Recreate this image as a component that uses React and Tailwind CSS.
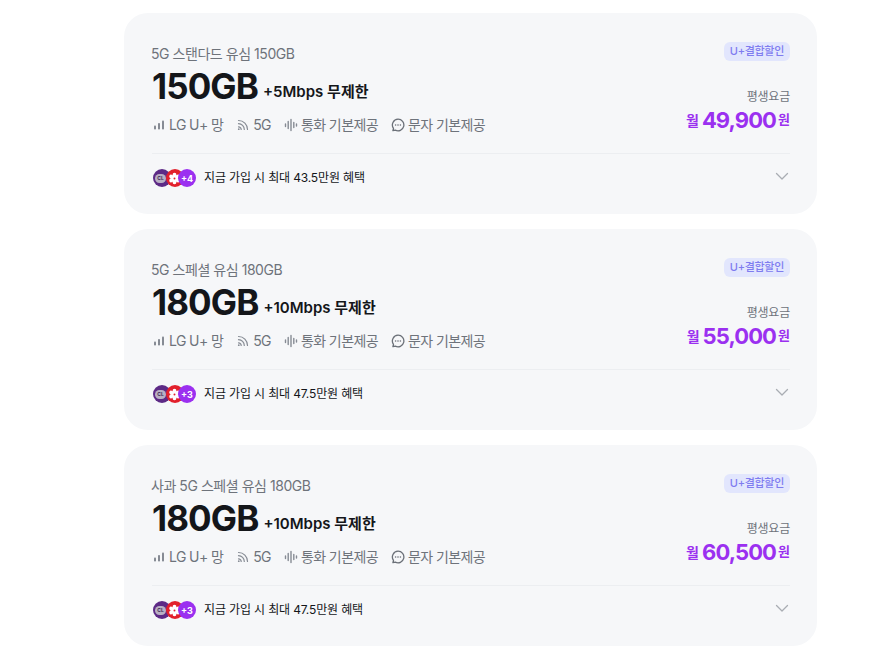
const plans = [
  { name: '5G 스탠다드 유심 150GB', data: '150GB', speed: '+5Mbps 무제한', price: '49,900', benefit: '지금 가입 시 최대 43.5만원 혜택', more: '+4' },
  { name: '5G 스페셜 유심 180GB', data: '180GB', speed: '+10Mbps 무제한', price: '55,000', benefit: '지금 가입 시 최대 47.5만원 혜택', more: '+3' },
  { name: '사과 5G 스페셜 유심 180GB', data: '180GB', speed: '+10Mbps 무제한', price: '60,500', benefit: '지금 가입 시 최대 47.5만원 혜택', more: '+3' },
];

function SignalIcon() {
  return (
    <svg width="12" height="12" viewBox="0 0 12 12" className="text-[#868b94]">
      <rect x="1" y="6.5" width="2" height="4" rx="0.8" fill="currentColor" />
      <rect x="5" y="4" width="2" height="6.5" rx="0.8" fill="currentColor" />
      <rect x="9" y="1.5" width="2" height="9" rx="0.8" fill="currentColor" />
    </svg>
  );
}

function RssIcon() {
  return (
    <svg width="12" height="12" viewBox="0 0 12 12" fill="none" stroke="#868b94" strokeWidth="1.2" strokeLinecap="round">
      <path d="M1.5 1.5c5 0 9 4 9 9" />
      <path d="M1.5 4.7c3.2 0 5.8 2.6 5.8 5.8" />
      <path d="M1.5 7.8c1.5 0 2.7 1.2 2.7 2.7" />
      <circle cx="1.8" cy="10.2" r="0.9" fill="#868b94" stroke="none" />
    </svg>
  );
}

function WaveIcon() {
  return (
    <svg width="14" height="14" viewBox="0 0 14 14" fill="none" stroke="#868b94" strokeWidth="1.4" strokeLinecap="round">
      <path d="M1.5 6v2.5M4.2 3.5v7M7 1.5v11M9.8 4.5v5M12.5 6v2" />
    </svg>
  );
}

function ChatIcon() {
  return (
    <svg width="14" height="14" viewBox="0 0 14 14" fill="none">
      <path d="M7 1.2a5.8 5.8 0 1 1-2.7 10.9l-2.4.6.6-2.3A5.8 5.8 0 0 1 7 1.2z" stroke="#6b7078" strokeWidth="1.3" strokeLinejoin="round" />
      <circle cx="4.6" cy="7" r="0.8" fill="#6b7078" />
      <circle cx="7" cy="7" r="0.8" fill="#6b7078" />
      <circle cx="9.4" cy="7" r="0.8" fill="#6b7078" />
    </svg>
  );
}

function Spec({ icon, label }) {
  return (
    <span className="flex items-center gap-[3px]">
      <span className="flex h-[14px] w-[14px] items-center justify-center">{icon}</span>
      <span>{label}</span>
    </span>
  );
}

function BenefitLogos({ more }) {
  return (
    <div className="ml-[1px] flex items-center">
      <div className="flex h-[18px] w-[18px] items-center rounded-full bg-[#5d2a86] pl-[2px]">
        <span className="flex h-[9px] w-[11px] items-center justify-center rounded-full bg-[#b9b0c4] text-[5px] font-bold leading-none text-[#3d2a55]">CL</span>
      </div>
      <div className="-ml-[5.5px] flex h-[18px] w-[18px] items-center justify-center rounded-full bg-[#e2202c]">
        <svg width="13" height="13" viewBox="0 0 12 12" fill="#fff">
          <ellipse cx="6" cy="2.8" rx="1.8" ry="2.2" />
          <ellipse cx="6" cy="2.8" rx="1.8" ry="2.2" transform="rotate(60 6 6)" />
          <ellipse cx="6" cy="2.8" rx="1.8" ry="2.2" transform="rotate(120 6 6)" />
          <ellipse cx="6" cy="2.8" rx="1.8" ry="2.2" transform="rotate(180 6 6)" />
          <ellipse cx="6" cy="2.8" rx="1.8" ry="2.2" transform="rotate(240 6 6)" />
          <ellipse cx="6" cy="2.8" rx="1.8" ry="2.2" transform="rotate(300 6 6)" />
          <circle cx="6" cy="6" r="2" />
          <circle cx="6" cy="6" r="0.9" fill="#e2202c" />
        </svg>
      </div>
      <div className="-ml-[5.5px] flex h-[18px] w-[18px] items-center justify-center rounded-full bg-[#9b30f0] text-[9px] font-bold leading-none text-white">{more}</div>
    </div>
  );
}

function PlanCard({ plan }) {
  return (
    <div className="h-[201px] rounded-[24px] bg-[#f6f7f9] pl-[28px] pr-[27px]">
      <div className="flex h-[141px] justify-between border-b border-[#eceef1] pt-[31px]">
        <div>
          <p className="-ml-px text-[14px] leading-[20px] tracking-[-0.45px] text-[#6e737b]">{plan.name}</p>
          <div className="flex items-center gap-[5px]">
            <span className="text-[35px] font-bold leading-[44px] tracking-[-0.9px] text-[#14161a]">{plan.data}</span>
            <span className="mt-[12px] text-[15px] font-semibold text-[#14161a]">{plan.speed}</span>
          </div>
          <div className="mt-[7px] flex items-center gap-[13px] text-[14px] leading-[20px] tracking-[-0.6px] text-[#6e737b]">
            <Spec icon={<SignalIcon />} label="LG U+ 망" />
            <Spec icon={<RssIcon />} label="5G" />
            <Spec icon={<WaveIcon />} label="통화 기본제공" />
            <Spec icon={<ChatIcon />} label="문자 기본제공" />
          </div>
        </div>
        <div className="flex flex-col items-end">
          <span className="-mt-[2px] flex h-[19px] items-center rounded-[6px] bg-[#e2e6fd] px-[6px] text-[11px] font-medium tracking-[-0.3px] text-[#7f7cf0]">U+결합할인</span>
          <span className="mt-[28px] text-[12px] leading-[16px] tracking-[-0.2px] text-[#6e737b]">평생요금</span>
          <div className="flex items-center gap-[2px] text-[#9b30f0]">
            <span className="mr-[1px] text-[14px] font-bold">월</span>
            <span className="text-[22px] font-bold leading-[30px] tracking-[-0.9px]">{plan.price}</span>
            <span className="text-[13px] font-bold">원</span>
          </div>
        </div>
      </div>
      <div className="flex h-[48px] items-center justify-between">
        <div className="flex items-center gap-[8px]">
          <BenefitLogos more={plan.more} />
          <span className="text-[12px] font-normal tracking-[-0.15px] text-[#14161a]">{plan.benefit}</span>
        </div>
        <svg width="16" height="16" viewBox="0 0 16 16" fill="none" stroke="#a9adb3" strokeWidth="1.3" strokeLinecap="round" strokeLinejoin="round">
          <path d="M2.500 3.500 8 9l5.500-5.500" />
        </svg>
      </div>
    </div>
  );
}

export default function App() {
  return (
    <div className="h-[665px] overflow-hidden bg-white pl-[124px] pr-[74px] pt-[13px] font-['Inter','Noto_Sans_CJK_KR',sans-serif]">
      <div className="flex flex-col gap-[15px]">
        {plans.map((plan, i) => <PlanCard key={i} plan={plan} />)}
      </div>
    </div>
  );
}
